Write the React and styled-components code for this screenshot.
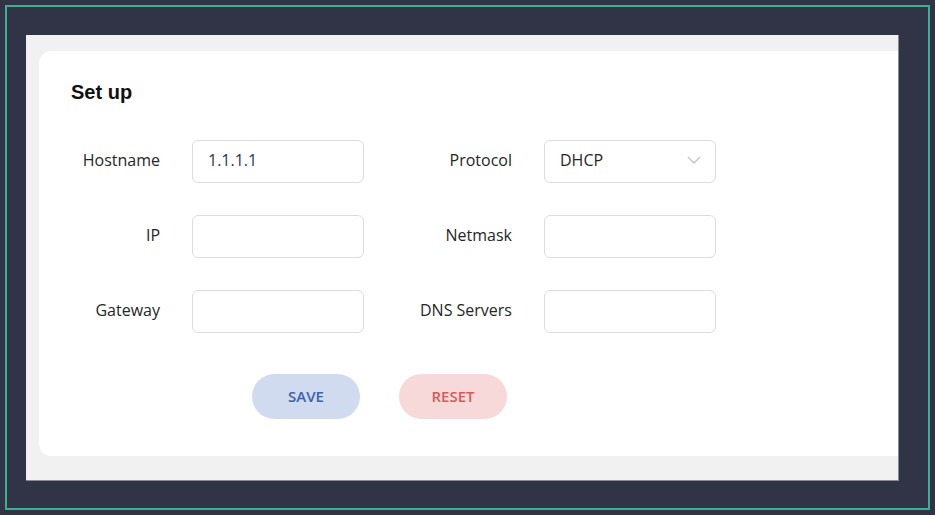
import styled, {createGlobalStyle} from 'styled-components'

const GlobalStyle = createGlobalStyle`
    html, body {
        margin: 0;
        padding: 0;
        background: #313346;
    }
    * { box-sizing: border-box; }
`

const Frame = styled.div`
    width: 935px;
    height: 515px;
    padding: 5px;
    background: #313346;
`

const Outline = styled.div`
    height: 505px;
    width: 925px;
    border: 2px solid #3bae93;
    padding: 28px 30px 27px 19px;
`

const Canvas = styled.div`
    height: 446px;
    width: 873px;
    background: #f1f1f1;
    border-right: 1px solid #8b8b92;
    border-bottom: 1px solid #8b8b92;
    padding: 16px 0 24px 13px;
    overflow: hidden;
`

const Card = styled.section`
    width: 900px;
    height: 405px;
    background: #ffffff;
    border-radius: 12px;
    padding: 30px 0 0 32px;
`

const Title = styled.h2`
    margin: 0;
    font-family: "Liberation Sans", Arial, sans-serif;
    font-weight: 700;
    font-size: 20px;
    line-height: 22px;
    color: #111;
`

const FormGrid = styled.div`
    margin: 37px 0 0 -11px;
    display: grid;
    grid-template-columns: 304px 304px;
    column-gap: 48px;
    row-gap: 32px;
`

const Field = styled.div`
    display: flex;
    align-items: center;
    gap: 32px;
`

const Label = styled.label`
    width: 100px;
    text-align: right;
    font-family: "Open Sans", "Noto Sans", sans-serif;
    font-size: 16px;
    line-height: 20px;
    padding-bottom: 3px;
    color: #262626;
`

const Input = styled.input`
    width: 172px;
    height: 43px;
    border: 1px solid #dcdcdc;
    border-radius: 6px;
    padding: 0 15px 3px;
    font-family: "Open Sans", "Noto Sans", sans-serif;
    font-size: 16px;
    color: #25345a;
    outline: none;
    background: #fff;
`

const SelectBox = styled.div`
    width: 172px;
    height: 43px;
    border: 1px solid #dcdcdc;
    border-radius: 6px;
    padding: 0 14px 3px 15px;
    display: flex;
    align-items: center;
    justify-content: space-between;
    font-family: "Open Sans", "Noto Sans", sans-serif;
    font-size: 16px;
    color: #262626;
`

const Actions = styled.div`
    display: flex;
    gap: 39px;
    margin: 41px 0 0 181px;
`

const PillButton = styled.button`
    width: 108px;
    height: 45px;
    border: none;
    border-radius: 23px;
    padding: 0 0 2px;
    background: ${p => p.$bg};
    color: ${p => p.$fg};
    font-family: "Open Sans", "Noto Sans", sans-serif;
    font-size: 15px;
    font-weight: 600;
    cursor: pointer;
`

const Chevron = () => (
    <svg width="14" height="8" viewBox="0 0 14 8">
        <path d="M1 1 L7 7 L13 1" fill="none" stroke="#c2c2c2" strokeWidth="1.3"/>
    </svg>
)

const App = () => {
    return (
        <Frame>
            <GlobalStyle />
            <Outline>
                <Canvas>
                    <Card>
                        <Title>Set up</Title>
                        <FormGrid>
                            <Field>
                                <Label>Hostname</Label>
                                <Input defaultValue="1.1.1.1"/>
                            </Field>
                            <Field>
                                <Label>Protocol</Label>
                                <SelectBox>
                                    <span>DHCP</span>
                                    <Chevron />
                                </SelectBox>
                            </Field>
                            <Field>
                                <Label>IP</Label>
                                <Input/>
                            </Field>
                            <Field>
                                <Label>Netmask</Label>
                                <Input/>
                            </Field>
                            <Field>
                                <Label>Gateway</Label>
                                <Input/>
                            </Field>
                            <Field>
                                <Label>DNS Servers</Label>
                                <Input/>
                            </Field>
                        </FormGrid>
                        <Actions>
                            <PillButton $bg="#d0dbef" $fg="#3c62ad">SAVE</PillButton>
                            <PillButton $bg="#f7d9da" $fg="#d65a5c">RESET</PillButton>
                        </Actions>
                    </Card>
                </Canvas>
            </Outline>
        </Frame>
    )
}

export default App
